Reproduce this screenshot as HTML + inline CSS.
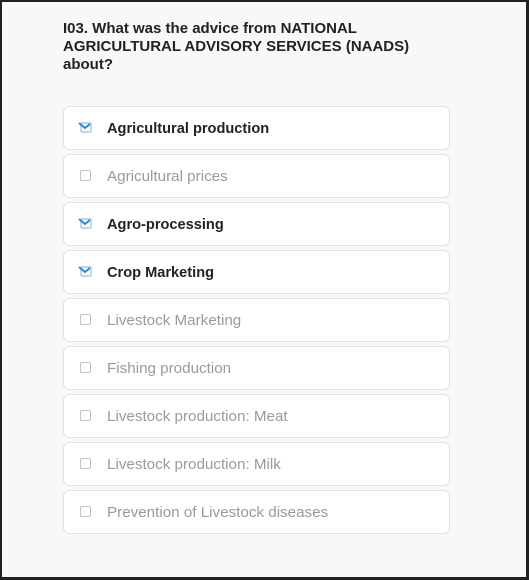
<!DOCTYPE html>
<html><head><style>
*{margin:0;padding:0;box-sizing:border-box}
body{width:529px;height:580px;overflow:hidden;background:#fff;font-family:"Liberation Sans",Roboto,sans-serif}
.frame{position:absolute;left:0;top:0;width:529px;height:580px;border:2px solid #222;border-right-width:3px;border-bottom-width:3px;background:#f8f8f8}
.q{position:absolute;left:63px;top:20px;width:380px;font-size:15px;font-weight:bold;color:#222;line-height:18px}
.card{position:absolute;left:63px;width:387px;height:44px;background:#fff;border:1px solid #e2e2e2;border-radius:6px}
.cb{position:absolute;left:16px;top:15px;width:11px;height:11px;border:1.5px solid #b8c4d0;border-radius:2px}
.ck{position:absolute;left:14px;top:13px}
.t{position:absolute;left:43px;top:13px;font-size:15.2px;color:#9a9a9a}
.on .t{color:#222;font-weight:bold;font-size:14.6px;top:14px}
</style></head><body>
<div class="frame"></div>
<div class="q">I03. What was the advice from NATIONAL AGRICULTURAL ADVISORY SERVICES (NAADS) about?</div>
<div class="card on" style="top:106px"><svg class="ck" width="15" height="14"><rect x="3" y="3" width="10" height="9" rx="1" fill="none" stroke="#b8c4d0" stroke-width="1.4"/><path d="M1 3 L7 8 L12 4" fill="none" stroke="#1d8fe0" stroke-width="2"/></svg><span class="t">Agricultural production</span></div>
<div class="card" style="top:154px"><div class="cb"></div><span class="t">Agricultural prices</span></div>
<div class="card on" style="top:202px"><svg class="ck" width="15" height="14"><rect x="3" y="3" width="10" height="9" rx="1" fill="none" stroke="#b8c4d0" stroke-width="1.4"/><path d="M1 3 L7 8 L12 4" fill="none" stroke="#1d8fe0" stroke-width="2"/></svg><span class="t">Agro-processing</span></div>
<div class="card on" style="top:250px"><svg class="ck" width="15" height="14"><rect x="3" y="3" width="10" height="9" rx="1" fill="none" stroke="#b8c4d0" stroke-width="1.4"/><path d="M1 3 L7 8 L12 4" fill="none" stroke="#1d8fe0" stroke-width="2"/></svg><span class="t">Crop Marketing</span></div>
<div class="card" style="top:298px"><div class="cb"></div><span class="t">Livestock Marketing</span></div>
<div class="card" style="top:346px"><div class="cb"></div><span class="t">Fishing production</span></div>
<div class="card" style="top:394px"><div class="cb"></div><span class="t">Livestock production: Meat</span></div>
<div class="card" style="top:442px"><div class="cb"></div><span class="t">Livestock production: Milk</span></div>
<div class="card" style="top:490px"><div class="cb"></div><span class="t">Prevention of Livestock diseases</span></div>
</body></html>
